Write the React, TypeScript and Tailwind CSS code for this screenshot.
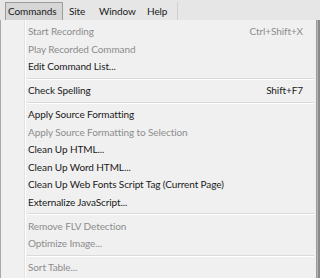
import React from "react";

type Item =
  | { type: "sep" }
  | { type: "item"; label: string; shortcut?: string; disabled?: boolean };

const items: Item[] = [
  { type: "item", label: "Start Recording", shortcut: "Ctrl+Shift+X", disabled: true },
  { type: "item", label: "Play Recorded Command", disabled: true },
  { type: "item", label: "Edit Command List..." },
  { type: "sep" },
  { type: "item", label: "Check Spelling", shortcut: "Shift+F7" },
  { type: "sep" },
  { type: "item", label: "Apply Source Formatting" },
  { type: "item", label: "Apply Source Formatting to Selection", disabled: true },
  { type: "item", label: "Clean Up HTML..." },
  { type: "item", label: "Clean Up Word HTML..." },
  { type: "item", label: "Clean Up Web Fonts Script Tag (Current Page)" },
  { type: "item", label: "Externalize JavaScript..." },
  { type: "sep" },
  { type: "item", label: "Remove FLV Detection", disabled: true },
  { type: "item", label: "Optimize Image...", disabled: true },
  { type: "sep" },
  { type: "item", label: "Sort Table...", disabled: true },
];

export default function App() {
  return (
    <div
      className="w-[320px] h-[278px] overflow-hidden flex flex-col bg-[#f0f0f0] text-[10px] tracking-[-0.1px]"
      style={{ fontFamily: 'Lato, "Noto Sans", sans-serif' }}
    >
      <div className="h-[20px] shrink-0 flex items-end bg-[#e6e6e6] pl-[5px]">
        <div className="h-[18px] w-[58px] flex items-center pl-[2px] bg-[#d6d6d6] border border-b-0 border-[#9c9c9c] text-[#1a1a1a]">
          Commands
        </div>
        <div className="h-[18px] flex items-center pl-[6px] w-[36px] text-[#1a1a1a]">Site</div>
        <div className="h-[18px] flex items-center w-[48px] text-[#1a1a1a]">Window</div>
        <div className="h-[18px] flex items-center w-[30px] text-[#1a1a1a]">Help</div>
        <div className="h-[18px] w-px bg-[#cfcfcf]" />
      </div>
      <div className="flex flex-1 min-h-0">
        <div className="w-[1px] bg-[#a9a9a9] shrink-0" />
        <div className="w-[316px] shrink-0 relative bg-[#f0f0f0] border-r border-[#9a9a9a] pt-[3px]">
          <div className="absolute left-[23px] top-0 bottom-0 w-px bg-[#e2e2e2]" />
          <div className="absolute left-[24px] top-0 bottom-0 w-px bg-[#ffffff]" />
          {items.map((it, i) =>
            it.type === "sep" ? (
              <div key={i} className="h-[6.5px] flex flex-col justify-center pl-[26px] pr-[2px]">
                <div className="h-px bg-[#dadada]" />
                <div className="h-px bg-[#ffffff]" />
              </div>
            ) : (
              <div
                key={i}
                className={`h-[17.5px] flex items-center pl-[27px] pr-[13px] ${
                  it.disabled ? "text-[#8d8d8d]" : "text-[#1a1a1a]"
                }`}
              >
                <span className="flex-1 whitespace-nowrap">{it.label}</span>
                {it.shortcut && <span className="whitespace-nowrap">{it.shortcut}</span>}
              </div>
            )
          )}
        </div>
        <div className="flex-1 bg-[#b4b4b4] border-r-2 border-[#8a8a8a]" />
      </div>
    </div>
  );
}
